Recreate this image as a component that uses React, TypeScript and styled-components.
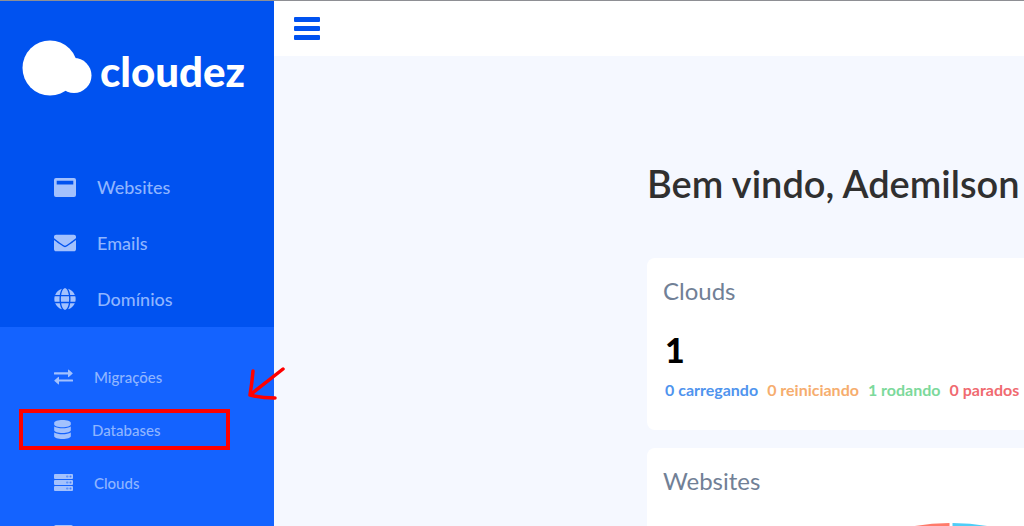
import React from "react";
import styled, { createGlobalStyle } from "styled-components";
import { FaDatabase, FaEnvelope, FaGlobe } from "react-icons/fa";

const GlobalStyle = createGlobalStyle`
  * { box-sizing: border-box; }
  body {
    margin: 0;
    background: #f5f8ff;
    font-family: Lato, "Open Sans", sans-serif;
  }
`;

const Shell = styled.div`
  display: flex;
  height: 100vh;
  overflow: hidden;
  border-top: 1px solid #8e8f94;
`;

const Sidebar = styled.aside`
  position: relative;
  z-index: 1;
  flex: 0 0 274px;
  background: #1463ff;
`;

const Brand = styled.a`
  display: flex;
  align-items: center;
  gap: 8px;
  height: 158px;
  padding: 0 0 24px 22px;
  background: #0052f0;
  color: #fff;
  text-decoration: none;
`;

const BrandName = styled.span`
  padding-top: 6px;
  font-size: 42px;
  line-height: 48px;
  font-weight: 900;
`;

const NavList = styled.ul<{ $secondary?: boolean }>`
  list-style: none;
  margin: 0;
  padding: ${(p) => (p.$secondary ? "23px 0 0" : "0")};
  background: ${(p) => (p.$secondary ? "#1463ff" : "#0052f0")};
`;

const NavItem = styled.li`
  position: relative;
`;

const NavLink = styled.a<{ $small?: boolean }>`
  display: flex;
  align-items: center;
  gap: 21px;
  height: ${(p) => (p.$small ? "53px" : "56px")};
  padding-left: 54px;
  color: #8fb5ff;
  font-size: ${(p) => (p.$small ? "15px" : "18px")};
  font-weight: 500;
  text-decoration: none;

  svg {
    flex: none;
    color: #a3c1fd;
  }
`;

const DatabaseIcon = styled(FaDatabase)`
  width: 17px;
  height: 19px;
`;

const Highlight = styled.span`
  position: absolute;
  inset: 6px 44px 6px 19px;
  border: 4px solid #f00;
  pointer-events: none;
`;

const Arrow = styled.svg`
  position: absolute;
  right: -13px;
  bottom: 56px;
  pointer-events: none;
`;

const Content = styled.div`
  flex: 1;
  min-width: 0;
  display: flex;
  flex-direction: column;
`;

const TopBar = styled.header`
  flex: none;
  display: flex;
  align-items: center;
  height: 55px;
  padding-left: 20px;
  background: #fff;
`;

const MenuButton = styled.button`
  display: flex;
  padding: 0;
  border: 0;
  background: none;
  color: #0052f0;
  cursor: pointer;
`;

const Main = styled.main`
  display: flex;
  flex-direction: column;
  gap: 18px;
  padding: 103px 0 0 373px;
`;

const Title = styled.h1`
  margin: 0 0 33px;
  color: #303030;
  font-size: 38px;
  line-height: 48px;
  font-weight: 600;
  white-space: nowrap;
`;

const Card = styled.section`
  display: flex;
  flex-direction: column;
  min-height: 172px;
  padding: 16px 0 16px 16px;
  border-radius: 8px 0 0 8px;
  background: #fff;
`;

const CardTitle = styled.h2`
  margin: 0;
  color: #718096;
  font-size: 24px;
  line-height: 34px;
  font-weight: 400;
`;

const Total = styled.strong`
  padding: 20px 0 0 2px;
  color: #000;
  font-size: 34px;
  line-height: 44px;
  font-weight: 900;
`;

const Statuses = styled.div`
  display: flex;
  gap: 9px;
  padding: 6px 0 0 2px;
  font-size: 16px;
  line-height: 24px;
  font-weight: 700;
  white-space: nowrap;
`;

const Status = styled.span<{ $color: string }>`
  color: ${(p) => p.$color};
`;

const Donut = styled.svg`
  flex: none;
  align-self: flex-start;
  margin: 25px 0 0 88px;
`;

const CloudLogo = () => (
  <svg width="70" height="56" viewBox="0 0 70 56" fill="currentColor" aria-hidden="true">
    <circle cx="28" cy="28" r="27.5" />
    <circle cx="52" cy="35.5" r="17.5" />
  </svg>
);

const MenuIcon = () => (
  <svg width="26" height="24" viewBox="0 0 26 24" fill="currentColor" aria-hidden="true">
    <rect width="26" height="5" y="0" rx="1" />
    <rect width="26" height="5" y="9" rx="1" />
    <rect width="26" height="5" y="18" rx="1" />
  </svg>
);

const WindowIcon = () => (
  <svg width="22" height="19" viewBox="0 0 22 19" fill="currentColor" aria-hidden="true">
    <path
      fillRule="evenodd"
      d="M2 0h18a2 2 0 0 1 2 2v15a2 2 0 0 1-2 2H2a2 2 0 0 1-2-2V2a2 2 0 0 1 2-2Zm.7 2.700v3.800h16.600V2.700Z"
    />
  </svg>
);

const ExchangeIcon = () => (
  <svg width="19" height="16" viewBox="0 0 19 16" fill="currentColor" aria-hidden="true">
    <path d="M.5 3.200H14V1.200Q14 .2 14.800.8L18.500 4Q19 4.400 18.500 4.800L14.800 8Q14 8.500 14 7.500V5.400H.5Q0 5.400 0 4.900V3.700Q0 3.200.5 3.200Z" />
    <path d="M18.500 10.400H5V8.500Q5 7.500 4.200 8L.5 11.200Q0 11.600.5 12L4.200 15.200Q5 15.800 5 14.800V12.600H18.500Q19 12.600 19 12.100V10.900Q19 10.400 18.500 10.400Z" />
  </svg>
);

const ServerIcon = () => (
  <svg width="19" height="17" viewBox="0 0 19 17" aria-hidden="true">
    {[0, 6, 12].map((y) => (
      <g key={y}>
        <rect y={y} width="19" height="5" rx="1" fill="currentColor" />
        <rect x="12" y={y + 1.5} width="2.5" height="2" rx="1" fill="#1463ff" opacity=".5" />
        <rect x="15.5" y={y + 1.5} width="2" height="2" rx="1" fill="#1463ff" opacity=".7" />
      </g>
    ))}
  </svg>
);

const PanelIcon = () => (
  <svg width="19" height="22" viewBox="0 0 19 22" fill="currentColor" aria-hidden="true">
    <rect width="19" height="22" rx="2" />
  </svg>
);

const mainLinks = [
  { label: "Websites", icon: <WindowIcon /> },
  { label: "Emails", icon: <FaEnvelope size={22} /> },
  { label: "Domínios", icon: <FaGlobe size={22} /> },
];

const toolLinks = [
  { label: "Migrações", icon: <ExchangeIcon /> },
  { label: "Databases", icon: <DatabaseIcon />, marked: true },
  { label: "Clouds", icon: <ServerIcon /> },
  { label: "", icon: <PanelIcon /> },
];

const statuses = [
  { text: "0 carregando", color: "#4f94ee" },
  { text: "0 reiniciando", color: "#f6ad6e" },
  { text: "1 rodando", color: "#7cd99b" },
  { text: "0 parados", color: "#f06a70" },
];

export default function App() {
  return (
    <>
      <GlobalStyle />
      <Shell>
        <Sidebar>
          <Brand href="#">
            <CloudLogo />
            <BrandName>cloudez</BrandName>
          </Brand>
          <nav>
            <NavList>
              {mainLinks.map((l) => (
                <NavItem key={l.label}>
                  <NavLink href="#">
                    {l.icon}
                    {l.label}
                  </NavLink>
                </NavItem>
              ))}
            </NavList>
            <NavList $secondary>
              {toolLinks.map((l) => (
                <NavItem key={l.label}>
                  <NavLink href="#" $small>
                    {l.icon}
                    {l.label}
                  </NavLink>
                  {l.marked && (
                    <>
                      <Highlight />
                      <Arrow
                        width="40"
                        height="36"
                        viewBox="0 0 40 36"
                        fill="none"
                        stroke="#f00"
                        strokeWidth="3.5"
                        strokeLinecap="round"
                        strokeLinejoin="round"
                        aria-hidden="true"
                      >
                        <path d="M36 5 3 31M6 7Q5 19 3 31Q14 34 28 34" />
                      </Arrow>
                    </>
                  )}
                </NavItem>
              ))}
            </NavList>
          </nav>
        </Sidebar>
        <Content>
          <TopBar>
            <MenuButton type="button" aria-label="Menu">
              <MenuIcon />
            </MenuButton>
          </TopBar>
          <Main>
            <Title>Bem vindo, Ademilson</Title>
            <Card>
              <CardTitle>Clouds</CardTitle>
              <Total>1</Total>
              <Statuses>
                {statuses.map((s) => (
                  <Status key={s.text} $color={s.color}>
                    {s.text}
                  </Status>
                ))}
              </Statuses>
            </Card>
            <Card>
              <CardTitle>Websites</CardTitle>
              <Donut width="400" height="400" viewBox="0 0 400 400" fill="none" strokeWidth="40" aria-hidden="true">
                <path d="M198.5 20A180 180 0 0 0 198.5 380" stroke="#ff7b6b" />
                <path d="M201.5 20A180 180 0 0 1 201.5 380" stroke="#4fcdf7" />
              </Donut>
            </Card>
          </Main>
        </Content>
      </Shell>
    </>
  );
}
